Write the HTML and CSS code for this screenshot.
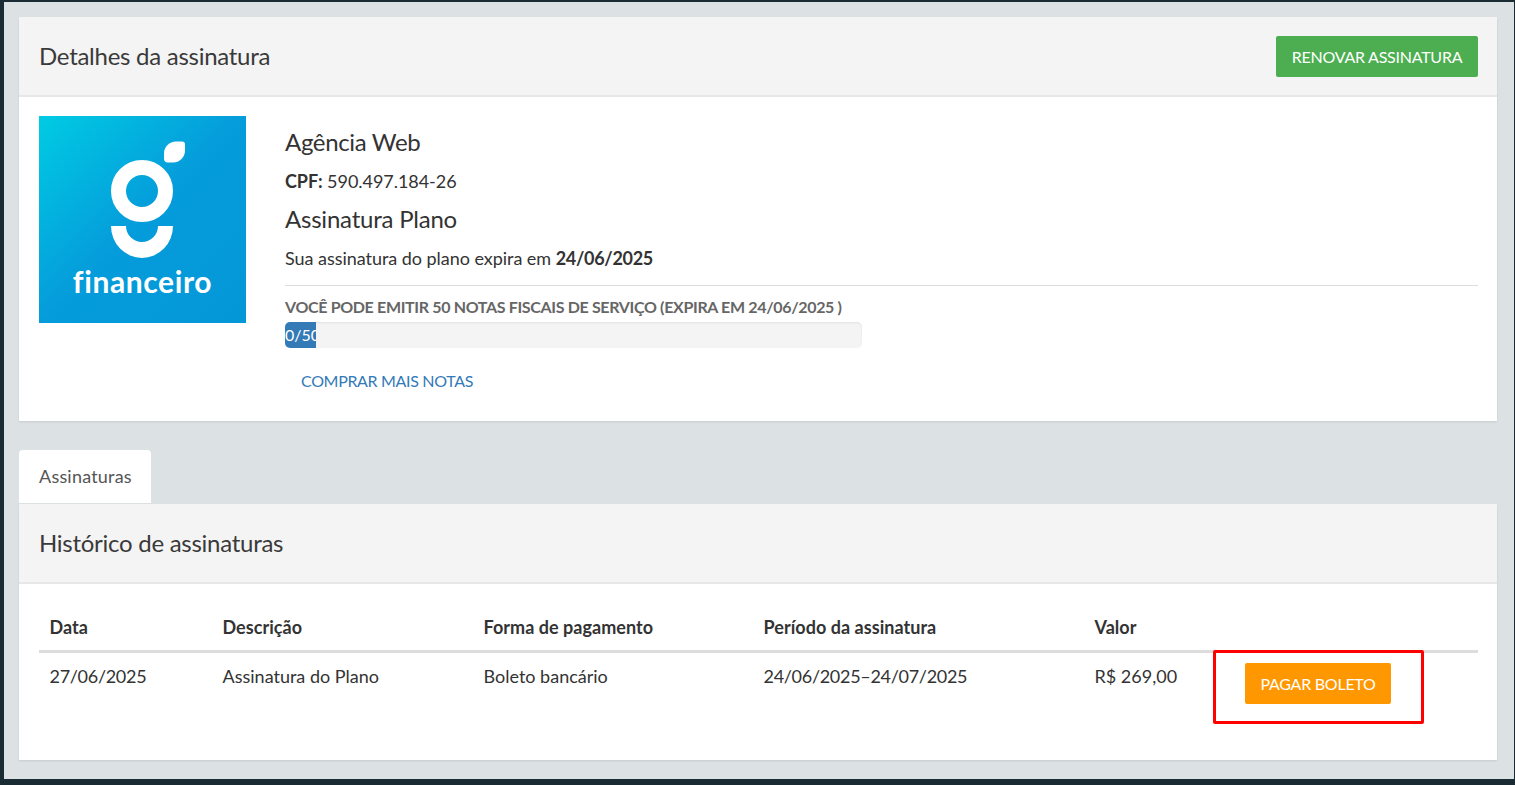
FILE: index.html
```html
<!DOCTYPE html>
<html lang="pt-BR">
<head>
<meta charset="utf-8">
<title>Detalhes da assinatura</title>
<link rel="stylesheet" href="styles.css">
</head>
<body>
<div class="app">
  <section class="panel">
    <header class="panel-head">
      <h2>Detalhes da assinatura</h2>
      <a class="btn btn-green" href="#">RENOVAR ASSINATURA</a>
    </header>
    <div class="panel-body details">
      <svg class="logo" viewBox="0 0 207 207" role="img" aria-label="financeiro">
        <defs>
          <linearGradient id="lg" x1="0" y1="0" x2="1" y2="1">
            <stop offset="0" stop-color="#00cbe3"/>
            <stop offset=".5" stop-color="#059cdb"/>
            <stop offset="1" stop-color="#0497d8"/>
          </linearGradient>
        </defs>
        <rect width="207" height="207" fill="url(#lg)"/>
        <circle cx="103" cy="75" r="23.5" fill="none" stroke="#fff" stroke-width="15"/>
        <path fill="#fff" d="M72 110h15a16 16 0 0 0 32 0h15a31 32 0 0 1-62 0z"/>
        <path fill="#fff" d="M143 25.500h-6a12 12 0 0 0-12 12v5q0 4 4 4h5a12 12 0 0 0 12-12v-6q0-3-3-3z"/>
        <text class="logo-text" x="103.500" y="177" text-anchor="middle">financeiro</text>
      </svg>
      <div class="info">
        <h3>Agência Web</h3>
        <p><b>CPF:</b> 590.497.184-26</p>
        <h3 class="plan">Assinatura Plano</h3>
        <p>Sua assinatura do plano expira em <b class="date">24/06/2025</b></p>
        <hr>
        <div class="quota">VOCÊ PODE EMITIR 50 NOTAS FISCAIS DE SERVIÇO (EXPIRA EM 24/06/2025 )</div>
        <div class="progress"><div class="bar">0/50</div></div>
        <a class="link" href="#">COMPRAR MAIS NOTAS</a>
      </div>
    </div>
  </section>

  <nav class="tabs"><a class="tab" href="#">Assinaturas</a></nav>

  <section class="panel history">
    <header class="panel-head">
      <h2>Histórico de assinaturas</h2>
    </header>
    <div class="panel-body">
      <table>
        <colgroup>
          <col class="c1"><col class="c2"><col class="c3"><col class="c4"><col class="c5"><col>
        </colgroup>
        <thead>
          <tr><th>Data</th><th>Descrição</th><th>Forma de pagamento</th><th>Período da assinatura</th><th>Valor</th><th></th></tr>
        </thead>
        <tbody>
          <tr>
            <td class="date">27/06/2025</td>
            <td>Assinatura do Plano</td>
            <td>Boleto bancário</td>
            <td class="date">24/06/2025–24/07/2025</td>
            <td>R$ 269,00</td>
            <td class="action"><a class="btn btn-orange" href="#">PAGAR BOLETO</a></td>
          </tr>
        </tbody>
      </table>
    </div>
  </section>
  <div class="highlight"></div>
</div>
</body>
</html>
```
FILE: styles.css
```css
* { box-sizing: border-box; }
html, body { height: 100%; }
body {
  margin: 0;
  background: #1b2b34;
  font-family: Lato, "Open Sans", sans-serif;
  font-size: 18px;
  color: #333;
  overflow: hidden;
}
a { text-decoration: none; }
.app {
  position: relative;
  margin: 2px 1px 0 4px;
  height: 777px;
  padding: 15px 17px 0 15px;
  background: #dce1e4;
}
.panel {
  background: #fff;
  box-shadow: 0 1px 2px rgba(0, 0, 0, .1);
}
.panel-head {
  display: flex;
  align-items: center;
  justify-content: space-between;
  height: 80px;
  padding: 0 19px 0 20px;
  background: #f4f4f4;
  border-bottom: 2px solid #e7e7e7;
}
.panel-head h2 {
  margin: 0 0 2px;
  font-size: 24px;
  font-weight: 400;
  letter-spacing: -.27px;
  color: #3a3a3a;
}
.btn {
  display: inline-block;
  height: 41px;
  border-radius: 2px;
  color: #fff;
  font-size: 16px;
  letter-spacing: -.25px;
  line-height: 41px;
  text-align: center;
  white-space: nowrap;
}
.btn-green { width: 202px; background: #4cae50; }
.btn-orange { width: 146px; background: #ff9800; }
.details {
  display: flex;
  gap: 39px;
  padding: 19px 19px 0 20px;
  height: 324px;
}
.logo { width: 207px; height: 207px; flex: none; }
.logo-text {
  font-family: Lato, sans-serif;
  font-size: 30px;
  font-weight: 700;
  font-variant-ligatures: none;
  letter-spacing: .6px;
  fill: #fff;
}
.info { flex: 1; min-width: 0; }
.info h3 {
  margin: 0;
  font-size: 24px;
  font-weight: 400;
  letter-spacing: -.35px;
  line-height: 32px;
  color: #333;
}
.info .plan { letter-spacing: -.22px; }
.info p {
  margin: 12px 0 11px;
  letter-spacing: -.04px;
  line-height: 22px;
}
.info > h3:first-child { margin-top: 10px; }
.info hr {
  margin: 16px 0 0;
  border: 0;
  border-top: 1px solid #ddd;
}
.date { letter-spacing: -.3px; }
.quota {
  margin-top: 11px;
  font-size: 16px;
  font-weight: 700;
  line-height: 20px;
  color: #666;
  letter-spacing: -.34px;
}
.progress {
  width: 577px;
  height: 26px;
  margin-top: 5px;
  overflow: hidden;
  border-radius: 5px;
  background: #f4f4f4;
  box-shadow: inset 0 1px 2px rgba(0, 0, 0, .08);
}
.bar {
  width: 31px;
  height: 26px;
  overflow: hidden;
  background: #337ab7;
  color: #fff;
  font-size: 16px;
  line-height: 26px;
  white-space: nowrap;
}
.link {
  display: block;
  margin: 23px 0 0 16px;
  font-size: 16px;
  letter-spacing: -.33px;
  line-height: 20px;
  color: #337ab7;
}
.tabs {
  display: flex;
  margin-top: 29px;
}
.tab {
  width: 132px;
  height: 53px;
  padding-left: 20px;
  background: #fff;
  border-radius: 4px 4px 0 0;
  color: #555;
  font-size: 18px;
  letter-spacing: .2px;
  line-height: 53px;
}
.history { margin-top: 1px; height: 256px; }
.history .panel-head { height: 80px; }
.history .panel-body { padding: 21px 19px 0 20px; }
table {
  width: 100%;
  table-layout: fixed;
  border-collapse: collapse;
}
.c1 { width: 173px; }
.c2 { width: 261px; }
.c3 { width: 280px; }
.c4 { width: 331px; }
.c5 { width: 118px; }
th {
  height: 46px;
  padding: 0 10.5px;
  border-bottom: 3px solid #ddd;
  color: #333;
  font-weight: 700;
  letter-spacing: .04px;
  text-align: left;
}
td {
  padding: 12px 10.5px 0;
  line-height: 22px;
  vertical-align: top;
}
td.action { padding: 10px 0 0 43px; }
.highlight {
  position: absolute;
  left: 1209px;
  top: 648px;
  width: 211px;
  height: 74px;
  border: 3px solid #f00;
  border-radius: 2px;
}
```
